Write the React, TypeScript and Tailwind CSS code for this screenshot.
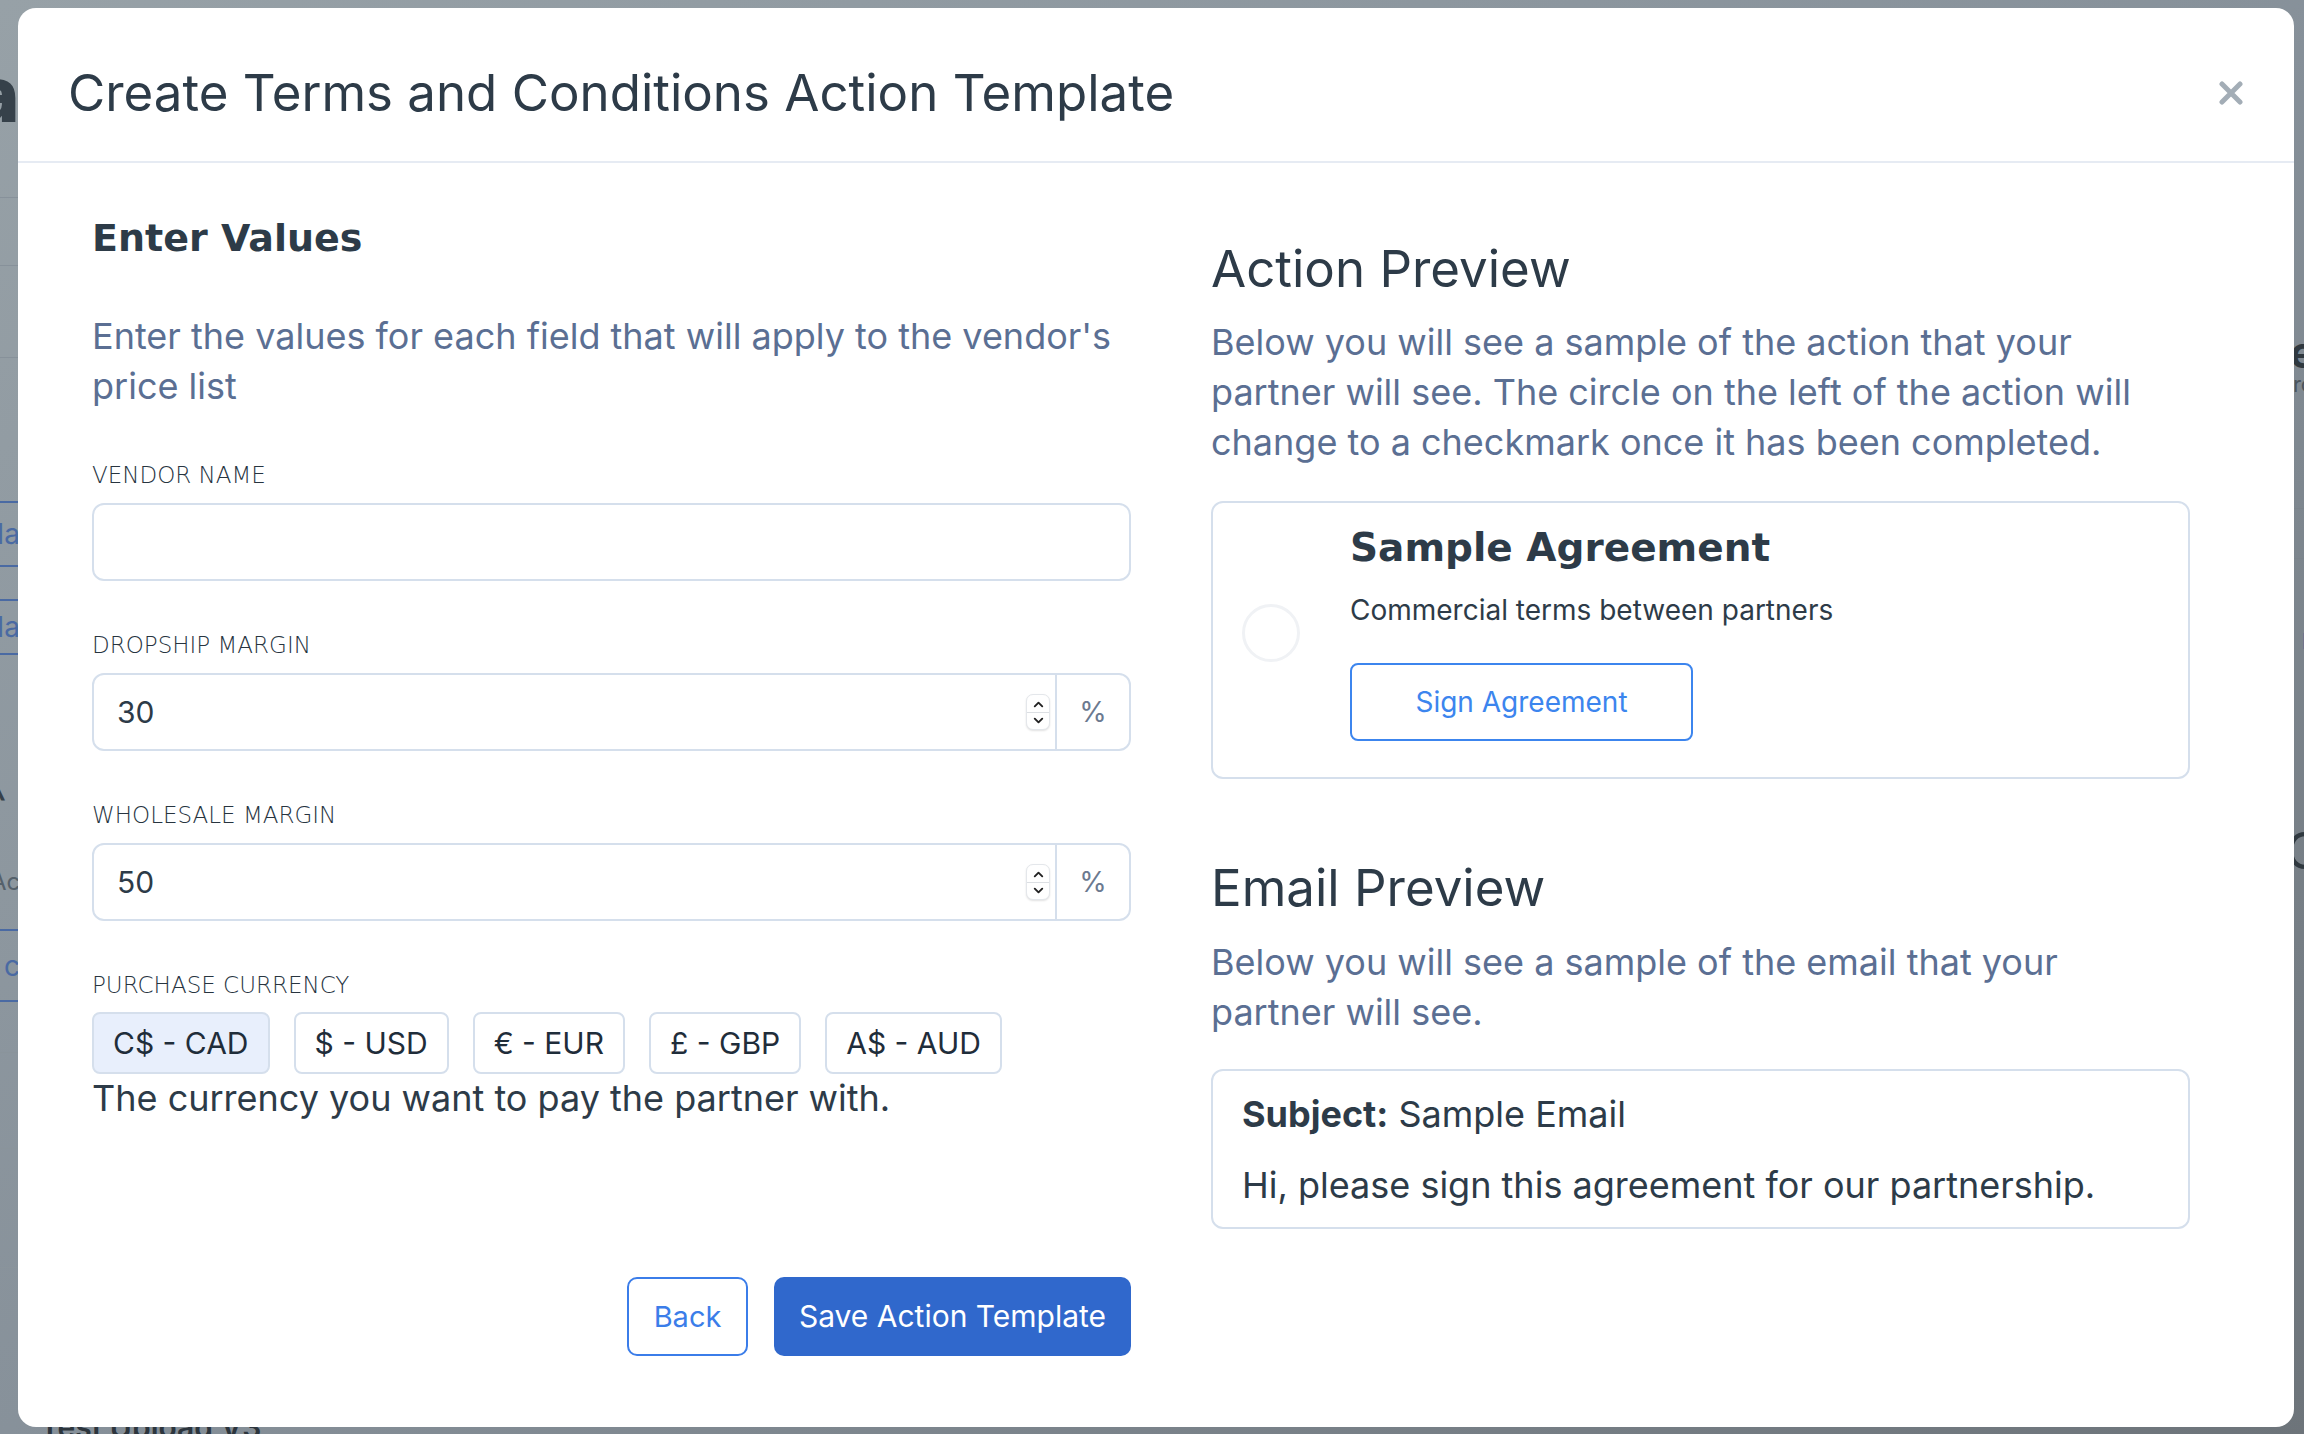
import { ChevronDown, ChevronUp } from 'lucide-react';

const CURRENCIES = ['C$ - CAD', '$ - USD', '€ - EUR', '£ - GBP', 'A$ - AUD'];

function FieldLabel({ children }: { children: string }) {
  return (
    <div className="font-['DejaVu_Sans',sans-serif] font-extralight text-[23px] leading-[32px] text-[#27343f]">
      {children}
    </div>
  );
}

function Spinner() {
  return (
    <div className="flex h-[36px] w-[24px] flex-col items-center justify-center rounded-[7px] border border-[#e4e7eb] bg-white shadow-[0_1px_2px_rgba(0,0,0,0.12)]">
      <ChevronUp size={15} strokeWidth={3} className="text-[#222]" />
      <div className="h-px w-full bg-[#dcdfe3]" />
      <ChevronDown size={15} strokeWidth={3} className="text-[#222]" />
    </div>
  );
}

function PercentInput({ value }: { value: string }) {
  return (
    <div className="mt-[12px] flex h-[78px] rounded-[12px] border-2 border-[#d5dfec] bg-white">
      <div className="flex flex-1 items-center pl-[23px] pr-[5px]">
        <span className="flex-1 text-[30px] text-[#2d3b48]">{value}</span>
        <Spinner />
      </div>
      <div className="flex w-[74px] items-center justify-center border-l-2 border-[#d5dfec] text-[28px] text-[#6b7a90]">
        %
      </div>
    </div>
  );
}

// the page behind the dimmed overlay, only its edges show
function BackdropPage() {
  return (
    <div className="absolute inset-0 overflow-hidden bg-gradient-to-br from-[#97a1a7] via-[#87919a] to-[#6d747a]">
      <div className="absolute left-[-30px] top-[58px] font-['DejaVu_Sans',sans-serif] text-[76px] font-bold leading-none text-[#36414a]">a</div>
      <div className="absolute left-0 top-[197px] h-px w-[30px] bg-[#87919a]" />
      <div className="absolute left-0 top-[265px] h-px w-[30px] bg-[#87919a]" />
      <div className="absolute left-0 top-[357px] h-px w-[30px] bg-[#87919a]" />
      <div className="absolute left-[-40px] top-[501px] flex h-[66px] w-[60px] items-center justify-end border-y-2 border-[#4a6aa3] text-[28px] text-[#4a6aa3]">Ma</div>
      <div className="absolute left-[-40px] top-[599px] flex h-[56px] w-[60px] items-center justify-end border-y-2 border-[#4a6aa3] text-[28px] text-[#4a6aa3]">Ma</div>
      <div className="absolute left-[-14px] top-[780px] text-[44px] leading-none text-[#36414a]">^</div>
      <div className="absolute left-[-10px] top-[870px] text-[24px] leading-none text-[#55616b]">Ac</div>
      <div className="absolute left-[-20px] top-[929px] flex h-[73px] w-[40px] items-center justify-end border-y-2 border-[#4a6aa3] text-[28px] text-[#4a6aa3]">c</div>
      <div className="absolute left-0 top-[1052px] h-px w-[30px] bg-[#8a949b]" />
      <div className="absolute left-0 top-[1148px] h-px w-[30px] bg-[#8a949b]" />
      <div className="absolute left-0 top-[1267px] h-px w-[30px] bg-[#8a949b]" />
      <div className="absolute left-[40px] top-[1412px] text-[30px] font-semibold leading-none text-[#2c353d]">Test Upload V3</div>
      <div className="absolute right-[-12px] top-[330px] text-[44px] font-bold leading-none text-[#2f383f]">e</div>
      <div className="absolute right-[-10px] top-[373px] text-[22px] leading-none text-[#4b555d]">ro</div>
      <div className="absolute right-0 top-[508px] h-px w-[20px] bg-[#7b848b]" />
      <div className="absolute right-0 top-[558px] h-px w-[20px] bg-[#7b848b]" />
      <div className="absolute right-[-8px] top-[625px] text-[28px] leading-none text-[#3c5a8c]">r</div>
      <div className="absolute right-[-20px] top-[826px] text-[50px] leading-none text-[#2f383f]">O</div>
      <div className="absolute right-[-6px] top-[905px] text-[22px] leading-none text-[#4b555d]">i</div>
    </div>
  );
}

export default function App() {
  return (
    <div className="relative min-h-screen w-full overflow-hidden pt-[8px] pl-[18px] font-[Inter,'Noto_Sans',sans-serif]">
      <BackdropPage />
      <div className="relative flex h-[1419px] w-[2276px] flex-col rounded-[18px] bg-white">
        {/* header */}
        <div className="flex h-[155px] items-center justify-between border-b-2 border-[#e6ebf3] pl-[50px] pr-[50px] pt-[16px]">
          <h1 className="text-[51px] leading-[60px] text-[#2d3b48]">Create Terms and Conditions Action Template</h1>
          <button type="button" className="flex h-[26px] w-[26px] items-center justify-center text-[#a3adb6]">
            <svg width="26" height="24" viewBox="0 0 26 24">
              <path d="M4 3 L22 21 M22 3 L4 21" stroke="currentColor" strokeWidth="5" strokeLinecap="round" />
            </svg>
          </button>
        </div>

        {/* body */}
        <div className="flex px-[74px] pt-[53px]">
          <div className="flex w-[1039px] flex-col">
            <h3 className="font-['DejaVu_Sans',sans-serif] text-[38px] font-bold leading-[44px] text-[#2d3b48]">Enter Values</h3>
            <p className="mt-[51px] text-[36px] leading-[50px] text-[#5b6f93]">
              Enter the values for each field that will apply to the vendor's price list
            </p>

            <div className="mt-[48px]">
              <FieldLabel>VENDOR NAME</FieldLabel>
              <div className="mt-[12px] h-[78px] rounded-[12px] border-2 border-[#d5dfec] bg-white" />
            </div>

            <div className="mt-[48px]">
              <FieldLabel>DROPSHIP MARGIN</FieldLabel>
              <PercentInput value="30" />
            </div>

            <div className="mt-[48px]">
              <FieldLabel>WHOLESALE MARGIN</FieldLabel>
              <PercentInput value="50" />
            </div>

            <div className="mt-[48px]">
              <FieldLabel>PURCHASE CURRENCY</FieldLabel>
              <div className="mt-[11px] flex gap-[24px]">
                {CURRENCIES.map((c, i) => (
                  <button
                    key={c}
                    type="button"
                    className={`h-[62px] rounded-[8px] border-2 border-[#d5dfec] px-[19px] text-[30px] text-[#1f2d3a] ${
                      i === 0 ? 'bg-[#e8effc]' : 'bg-white'
                    }`}
                  >
                    {c}
                  </button>
                ))}
              </div>
              <p className="text-[36px] leading-[48px] text-[#2d3b48]">The currency you want to pay the partner with.</p>
            </div>

            <div className="mt-[155px] flex justify-end gap-[26px]">
              <button
                type="button"
                className="h-[79px] w-[121px] rounded-[10px] border-2 border-[#3b7de9] bg-white text-[29px] text-[#3b7de9]"
              >
                Back
              </button>
              <button
                type="button"
                className="h-[79px] w-[357px] rounded-[10px] bg-[#3068cc] text-[30px] text-white"
              >
                Save Action Template
              </button>
            </div>
          </div>

          <div className="ml-[80px] mt-[22px] flex w-[979px] flex-col">
            <h2 className="text-[51px] leading-[61px] text-[#2d3b48]">Action Preview</h2>
            <p className="mt-[18px] max-w-[960px] text-[36px] leading-[50px] text-[#5b6f93]">
              Below you will see a sample of the action that your partner will see. The circle on the left of the
              action will change to a checkmark once it has been completed.
            </p>

            <div className="mt-[34px] flex items-center rounded-[12px] border-2 border-[#d5dfec] pb-[36px] pl-[29px] pt-[22px]">
              <div className="h-[58px] w-[58px] shrink-0 rounded-full border-[3px] border-[#f0f2f5]" />
              <div className="ml-[50px] flex flex-col items-start">
                <h4 className="font-['DejaVu_Sans',sans-serif] text-[39px] font-bold leading-[46px] text-[#2d3b48]">
                  Sample Agreement
                </h4>
                <div className="mt-[19px] text-[28px] leading-[40px] text-[#2d3b48]">Commercial terms between partners</div>
                <button
                  type="button"
                  className="mt-[33px] h-[78px] w-[343px] rounded-[8px] border-2 border-[#3c85ee] text-[28px] text-[#3c85ee]"
                >
                  Sign Agreement
                </button>
              </div>
            </div>

            <h2 className="mt-[78px] text-[51px] leading-[61px] text-[#2d3b48]">Email Preview</h2>
            <p className="mt-[19px] max-w-[960px] text-[36px] leading-[50px] text-[#5b6f93]">
              Below you will see a sample of the email that your partner will see.
            </p>

            <div className="mt-[32px] flex flex-col rounded-[12px] border-2 border-[#d5dfec] px-[29px] pb-[18px] pt-[19px]">
              <div className="text-[36px] leading-[48px] text-[#2d3b48]">
                <span className="font-bold">Subject:</span> Sample Email
              </div>
              <div className="mt-[23px] text-[36px] leading-[48px] text-[#2d3b48]">
                Hi, please sign this agreement for our partnership.
              </div>
            </div>
          </div>
        </div>
      </div>
    </div>
  );
}
